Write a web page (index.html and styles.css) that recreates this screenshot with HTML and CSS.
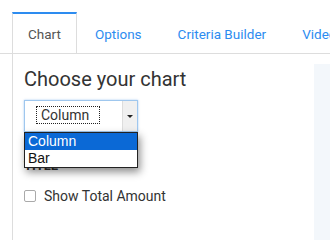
FILE: index.html
```html
<!DOCTYPE html>
<html lang="en">
  <head>
    <meta charset="UTF-8">
    <title>Chart settings</title>
    <link rel="stylesheet" href="styles.css">
  </head>
  <body>
    <nav class="tabs">
      <a class="tab active">Chart</a>
      <a class="tab">Options</a>
      <a class="tab">Criteria Builder</a>
      <a class="tab">Video</a>
    </nav>
    <div class="pane">
      <main class="main">
        <h2>Choose your chart</h2>
        <div class="select">
          <div class="select-box">
            <span class="select-value">Column</span>
            <span class="select-arrow"></span>
          </div>
          <ul class="dropdown">
            <li class="selected">Column</li>
            <li>Bar</li>
          </ul>
        </div>
        <div class="field-label">Title</div>
        <label class="check">
          <span class="checkbox"></span>
          Show Total Amount
        </label>
      </main>
      <aside class="side"></aside>
    </div>
  </body>
</html>
```

FILE: styles.css
```css
body {
  margin: 0;
  height: 240px;
  display: flex;
  flex-direction: column;
  background: #fff;
  font-family: Roboto, "Liberation Sans", sans-serif;
  color: #333;
  overflow: hidden;
}

.tabs {
  display: flex;
  margin-top: 12px;
  padding-left: 12px;
  height: 41px;
  border-bottom: 1px solid #ddd;
  white-space: nowrap;
  overflow: hidden;
}

.tab {
  display: flex;
  align-items: center;
  padding: 0 18px;
  font-size: 13.5px;
  color: #2d8cf0;
  border-top: 2px solid transparent;
}

.tab.active {
  padding: 0 15px;
  color: #555;
  background: #fff;
  border-top: 2px solid #2d8cf0;
  border-left: 1px solid #ddd;
  border-right: 1px solid #ddd;
}

.pane {
  flex: 1;
  display: flex;
  margin-left: 12px;
  margin-top: -1px;
  border-left: 1px solid #ddd;
  min-height: 0;
}

.main {
  flex: 1;
  padding: 13px 0 0 11px;
}

.main h2 {
  margin: 0 0 8px;
  font-size: 20px;
  font-weight: 400;
  line-height: 26px;
  color: #333;
}

.select {
  position: relative;
  width: 114px;
}

.select-box {
  display: flex;
  height: 30px;
  border: 1px solid #9fc7ee;
  box-shadow: 0 0 2px rgba(80, 150, 230, 0.5);
  background: #fff;
}

.select-value {
  margin: 6px 0 0 12px;
  padding: 0 4px;
  height: 16px;
  line-height: 16px;
  width: 54px;
  outline: 1px dotted #222;
  font-size: 14px;
  color: #333;
}

.select-arrow {
  margin-left: auto;
  width: 14px;
  background: #f0f0f0;
  border-left: 1px solid #ddd;
  position: relative;
}

.select-arrow::after {
  content: "";
  position: absolute;
  left: 4px;
  top: 14px;
  border-left: 3px solid transparent;
  border-right: 3px solid transparent;
  border-top: 3px solid #222;
}

.dropdown {
  position: absolute;
  top: 32px;
  left: 0;
  width: 112px;
  margin: 0;
  padding: 0;
  list-style: none;
  background: #fff;
  border: 1px solid #222;
  box-shadow: 2px 4px 8px rgba(0, 0, 0, 0.45);
  font-family: "Liberation Sans", Arial, sans-serif;
  font-size: 14px;
  z-index: 2;
}

.dropdown li {
  height: 17px;
  line-height: 17px;
  padding-left: 3px;
  color: #111;
}

.dropdown li.selected {
  background: #0b69d6;
  color: #fff;
}

.field-label {
  margin-top: 26px;
  font-size: 13px;
  font-weight: 700;
  line-height: 15px;
  text-transform: uppercase;
  color: #333;
}

.check {
  display: flex;
  align-items: center;
  gap: 8px;
  margin-top: 15px;
  font-size: 14px;
  line-height: 16px;
  color: #333;
}

.checkbox {
  width: 10px;
  height: 10px;
  border: 1px solid #aaa;
  border-radius: 2px;
  background: #fff;
}

.side {
  width: 16px;
  margin-top: 11px;
  background: #f3f7fb;
}
```
